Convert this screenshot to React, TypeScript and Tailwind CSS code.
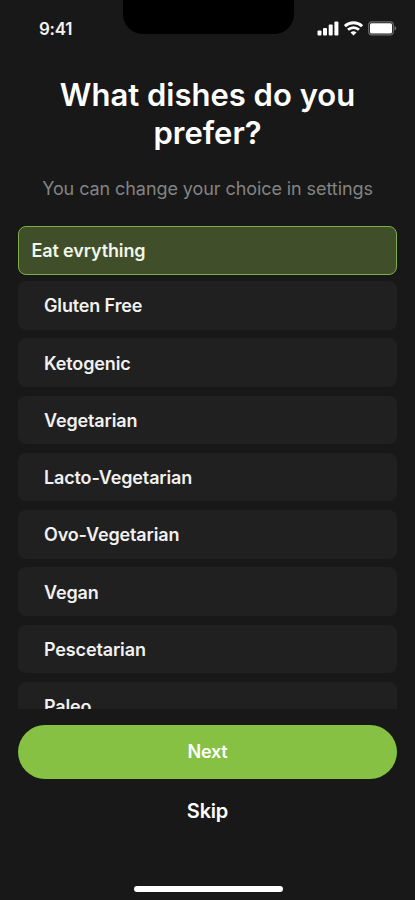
const dishes = [
  'Gluten Free',
  'Ketogenic',
  'Vegetarian',
  'Lacto-Vegetarian',
  'Ovo-Vegetarian',
  'Vegan',
  'Pescetarian',
  'Paleo',
];

function StatusBar() {
  return (
    <div className="flex h-[58px] shrink-0 items-start justify-between">
      <div className="w-[123px] pl-[39px] pt-[19px] text-[17px] leading-[20px] font-semibold tracking-[-0.3px] text-[#f2f2f2]">
        9:41
      </div>
      <div className="h-[34px] w-[171px] rounded-b-[20px] bg-black" />
      <div className="flex w-[121px] items-center gap-[5px] pl-[23px] pt-[21px]">
        <svg width="22" height="15" viewBox="0 0 22 15" fill="#fff">
          <rect x="0.5" y="9.5" width="4" height="5" rx="1" />
          <rect x="6" y="7" width="4" height="7.5" rx="1" />
          <rect x="11.7" y="3.5" width="4" height="11" rx="1" />
          <rect x="17.4" y="0.5" width="4" height="14" rx="1" />
        </svg>
        <svg width="19" height="15" viewBox="0 0 19 15" fill="none" stroke="#fff" strokeWidth="2.8">
          <path d="M0.9 5.2C5.7 0.6 13.3 0.6 18.1 5.2" />
          <path d="M4 8.8C7.1 5.9 11.9 5.9 15 8.8" />
          <path d="M9.5 14.4L6.5 11.4C8.2 9.8 10.8 9.8 12.5 11.4Z" fill="#fff" stroke="none" />
        </svg>
        <svg width="29" height="15" viewBox="0 0 29 15">
          <rect x="0.7" y="0.9" width="24.6" height="13" rx="3.2" fill="none" stroke="#6b6b6b" strokeWidth="1.2" />
          <rect x="2" y="2.2" width="22" height="10.4" rx="1.5" fill="#fff" />
          <path d="M26.6 5.1C28.6 5.9 28.6 8.9 26.6 9.7Z" fill="#777" />
        </svg>
      </div>
    </div>
  );
}

export default function App() {
  return (
    <main className="flex h-[900px] w-[415px] flex-col overflow-hidden bg-[#181818] font-['Inter',sans-serif] text-white">
      <StatusBar />
      <h1 className="mt-[18px] text-center text-[31px] leading-[38px] font-semibold">
        What dishes do you
        <br />
        prefer?
      </h1>
      <p className="mt-[25px] text-center text-[18px] leading-[24px] tracking-[-0.08px] text-[#828483]">
        You can change your choice in settings
      </p>
      <div className="mx-[18px] mt-[24px] flex h-[484px] shrink-0 flex-col overflow-hidden text-[18px] font-semibold tracking-[-0.14px] text-[#f1f1f1]">
        <button className="mt-px flex h-[49px] w-full shrink-0 items-center rounded-[8px] border-[1.5px] border-[#7cae48] bg-[#404f2a] pb-px pl-[12.5px] text-left text-[#f0f6e9]">
          Eat evrything
        </button>
        <div className="mt-[6px] flex flex-col gap-[8.8px]">
          {dishes.map((dish) => (
            <button
              key={dish}
              className="flex h-[48.5px] shrink-0 items-center rounded-[8px] bg-[#202020] pt-px pl-[26px] text-left"
            >
              {dish}
            </button>
          ))}
        </div>
      </div>
      <button className="mx-[18px] mt-[16px] h-[54px] shrink-0 rounded-full bg-[#87c144] pb-px text-[18px] font-semibold tracking-[-0.2px]">
        Next
      </button>
      <button className="mt-[20px] h-[24px] shrink-0 self-center text-[20px] leading-[24px] font-semibold tracking-[-0.2px]">
        Skip
      </button>
      <div className="mt-[62.5px] ml-[134px] h-[6px] w-[149px] shrink-0 rounded-full bg-white" />
    </main>
  );
}
